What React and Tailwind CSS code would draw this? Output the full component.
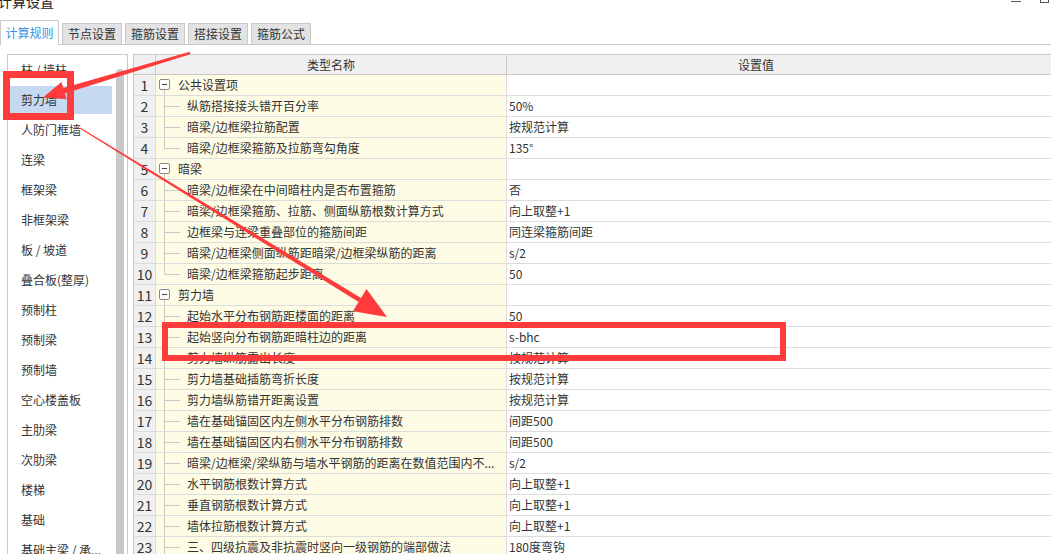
import React from "react";

const FONT = { fontFamily: '"Noto Sans CJK SC", "Noto Sans", sans-serif' };

const leftItems = [
  "柱 / 墙柱",
  "剪力墙",
  "人防门框墙",
  "连梁",
  "框架梁",
  "非框架梁",
  "板 / 坡道",
  "叠合板(整厚)",
  "预制柱",
  "预制梁",
  "预制墙",
  "空心楼盖板",
  "主肋梁",
  "次肋梁",
  "楼梯",
  "基础",
  "基础主梁 / 承...",
];

const rows = [
  { n: 1, g: true, name: "公共设置项" },
  { n: 2, name: "纵筋搭接接头错开百分率", v: "50%" },
  { n: 3, name: "暗梁/边框梁拉筋配置", v: "按规范计算" },
  { n: 4, name: "暗梁/边框梁箍筋及拉筋弯勾角度", v: "135°", last: true },
  { n: 5, g: true, name: "暗梁" },
  { n: 6, name: "暗梁/边框梁在中间暗柱内是否布置箍筋", v: "否" },
  { n: 7, name: "暗梁/边框梁箍筋、拉筋、侧面纵筋根数计算方式", v: "向上取整+1" },
  { n: 8, name: "边框梁与连梁重叠部位的箍筋间距", v: "同连梁箍筋间距" },
  { n: 9, name: "暗梁/边框梁侧面纵筋距暗梁/边框梁纵筋的距离", v: "s/2" },
  { n: 10, name: "暗梁/边框梁箍筋起步距离", v: "50", last: true },
  { n: 11, g: true, name: "剪力墙" },
  { n: 12, name: "起始水平分布钢筋距楼面的距离", v: "50" },
  { n: 13, name: "起始竖向分布钢筋距暗柱边的距离", v: "s-bhc" },
  { n: 14, name: "剪力墙纵筋露出长度", v: "按规范计算" },
  { n: 15, name: "剪力墙基础插筋弯折长度", v: "按规范计算" },
  { n: 16, name: "剪力墙纵筋错开距离设置", v: "按规范计算" },
  { n: 17, name: "墙在基础锚固区内左侧水平分布钢筋排数", v: "间距500" },
  { n: 18, name: "墙在基础锚固区内右侧水平分布钢筋排数", v: "间距500" },
  { n: 19, name: "暗梁/边框梁/梁纵筋与墙水平钢筋的距离在数值范围内不...", v: "s/2" },
  { n: 20, name: "水平钢筋根数计算方式", v: "向上取整+1" },
  { n: 21, name: "垂直钢筋根数计算方式", v: "向上取整+1" },
  { n: 22, name: "墙体拉筋根数计算方式", v: "向上取整+1" },
  { n: 23, name: "三、四级抗震及非抗震时竖向一级钢筋的端部做法", v: "180度弯钩" },
];

function GroupIcon() {
  return (
    <svg width="22" height="20" className="shrink-0">
      <rect x="3.5" y="4.5" width="10" height="10" rx="1.5" fill="#fff" stroke="#8a8a8a" />
      <line x1="6" y1="9.5" x2="11" y2="9.5" stroke="#444" />
      <line x1="8.5" y1="15" x2="8.5" y2="20" stroke="#c8c8c8" />
    </svg>
  );
}

function ChildLines({ last }) {
  return (
    <svg width="31" height="20" className="shrink-0">
      <line x1="8.5" y1="0" x2="8.5" y2={last ? 10.5 : 20} stroke="#c8c8c8" />
      <line x1="8.5" y1="10.5" x2="24" y2="10.5" stroke="#c8c8c8" />
    </svg>
  );
}

export default function App() {
  return (
    <div
      className="relative w-[1051px] h-[554px] overflow-hidden bg-white text-[#333] text-[12px]"
      style={FONT}
    >
      {/* Title bar */}
      <div className="h-[20px] overflow-hidden">
        <div className="ml-[-2px] mt-[-9px] text-[14px] leading-[20px] text-[#222]">计算设置</div>
      </div>

      {/* Tabs */}
      <div className="h-[25px] flex items-end border-b border-[#c9c9c9]">
        <div className="-mb-px h-[25px] w-[59px] bg-white border-x border-t border-[#c9c9c9] flex items-center justify-center text-[#3b8fe0] text-[12px]">
          计算规则
        </div>
        {["节点设置", "箍筋设置", "搭接设置", "箍筋公式"].map((t) => (
          <div
            key={t}
            className="ml-[3px] h-[21px] w-[60px] bg-[#e3e3e3] border-x border-t border-[#c9c9c9] flex items-center justify-center text-[#333]"
          >
            {t}
          </div>
        ))}
      </div>

      {/* Content */}
      <div className="flex pt-[9px] h-[509px]">
        {/* Left list */}
        <div className="ml-[7px] w-[121px] shrink-0 border border-[#c9c9c9] flex overflow-hidden h-[520px]">
          <div className="w-[104px] pl-[2px] shrink-0">
            {leftItems.map((it, i) => (
              <div key={it} className="h-[30px] flex items-center">
                <div
                  className={
                    i === 1
                      ? "w-[102px] h-[28px] bg-[#c5d9f0] flex items-center pl-[11px]"
                      : "w-[102px] h-[28px] flex items-center pl-[11px]"
                  }
                >
                  {it}
                </div>
              </div>
            ))}
          </div>
          <div className="w-[12px] pl-[4px] pt-[14px] shrink-0">
            <div className="w-[8px] h-full bg-[#c8c8c8] rounded-t-[4px]" />
          </div>
        </div>

        {/* Table */}
        <div className="ml-[5px] flex-1 border-l border-t border-[#c9c9c9] h-[520px] overflow-hidden">
          <div className="h-[20px] flex border-b border-[#c9c9c9] bg-[#f0f0f0]">
            <div className="w-[22px] shrink-0 border-r border-[#c9c9c9]" />
            <div className="w-[351px] shrink-0 border-r border-[#c9c9c9] flex items-center justify-center">
              类型名称
            </div>
            <div className="flex-1 flex items-center justify-center pr-[46px]">设置值</div>
          </div>
          {rows.map((r) => (
            <div key={r.n} className="h-[21px] flex border-b border-[#dcdcdc]">
              <div className="w-[22px] shrink-0 border-r border-[#dcdcdc] bg-[#f0f0f0] flex items-center justify-center text-[14px] leading-none">
                {r.n}
              </div>
              <div className="w-[351px] shrink-0 border-r border-[#dcdcdc] bg-[#fffce6] flex items-center whitespace-nowrap overflow-hidden">
                {r.g ? <GroupIcon /> : <ChildLines last={r.last} />}
                <span className="leading-none">{r.name}</span>
              </div>
              <div className="flex-1 bg-white flex items-center pl-[2px] whitespace-nowrap">
                {r.v || ""}
              </div>
            </div>
          ))}
        </div>
      </div>

      {/* Window controls */}
      <div className="absolute top-[1px] left-[1011px] w-[10px] h-px bg-[#555]" />
      <div className="absolute top-[-6px] left-[1040px] w-[9px] h-[9px] border border-[#555]" />

      {/* Annotations */}
      <svg className="absolute inset-0 pointer-events-none" width="1051" height="554">
        <rect x="6.5" y="74.5" width="64" height="42" fill="none" stroke="#ff3b3b" strokeWidth="7" />
        <rect x="165" y="325" width="618" height="33" fill="none" stroke="#ff3b3b" strokeWidth="6" />
        {/* arrow 1 */}
        <polygon points="190.3,54.2 189.7,51.8 61.5,88.6 63,94" fill="#ff3b3b" />
        <polygon points="43,97.5 66.7,99.3 61.5,82.1" fill="#ff3b3b" />
        {/* arrow 2 */}
        <polygon points="80.3,127.6 79.7,128.4 358.6,302 361,298" fill="#ff3b3b" />
        <polygon points="387,317 352.9,311.3 366.5,289.1" fill="#ff3b3b" />
      </svg>
    </div>
  );
}
